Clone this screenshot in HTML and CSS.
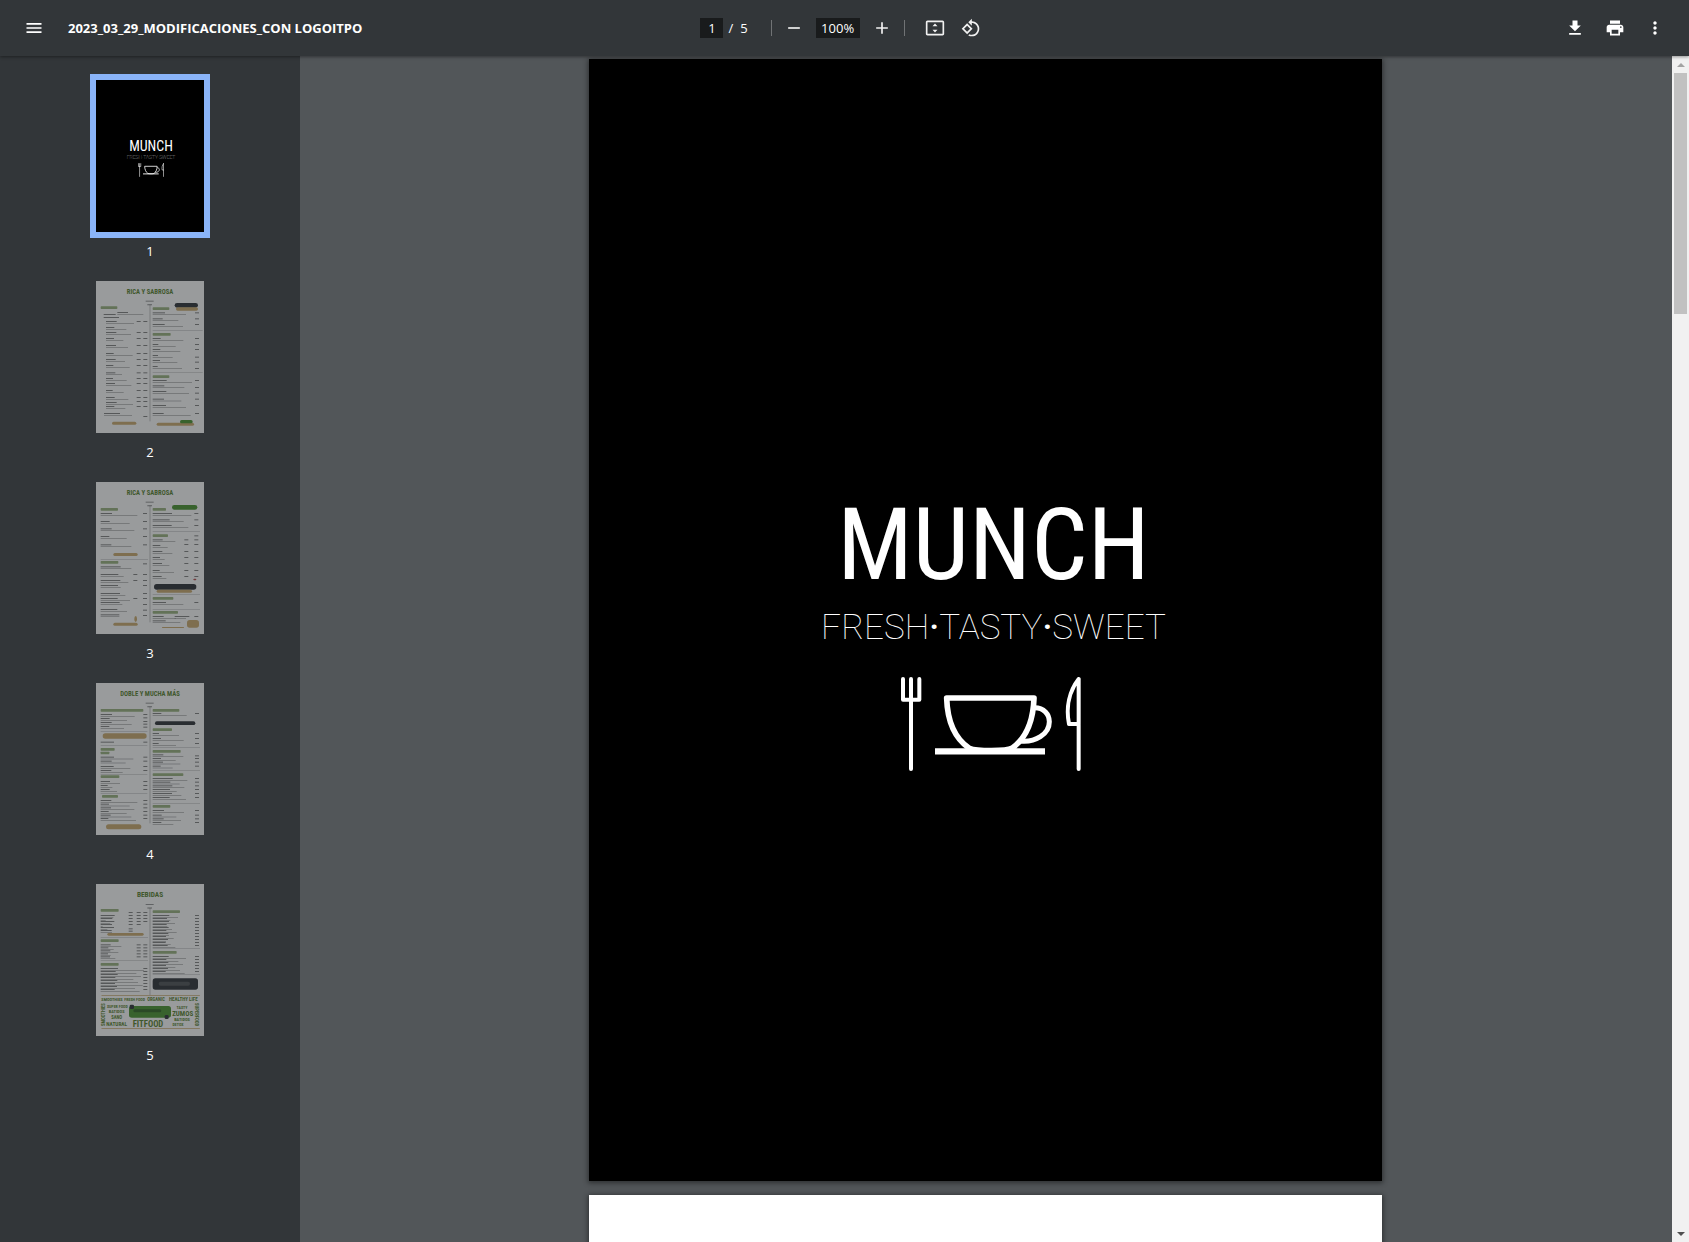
FILE: index.html
```html
<!DOCTYPE html>
<html lang="es">
<head>
<meta charset="utf-8">
<meta name="viewport" content="width=device-width, initial-scale=1">
<title>2023_03_29_MODIFICACIONES_CON LOGOITPO</title>
<link rel="stylesheet" href="styles.css">
</head>
<body>
<svg class="defs" aria-hidden="true">
  <symbol id="tableware" viewBox="300 588 546 288">
    <g fill="none" stroke="#fff" stroke-linejoin="round">
      <path stroke-width="12" stroke-linecap="round" d="M309 597V659H358V597M333 597V867M836 597V867M836 597C808 633 797 682 807 732H836"/>
      <path stroke-width="17" d="M440 654H702C700 722 678 775 636 805C620 814 530 814 508 805C464 775 442 722 440 654Z"/>
      <path stroke-width="15" d="M704 683C732 683 748 703 748 725C748 763 705 787 662 783"/>
      <path stroke-width="19" d="M405 814H735"/>
    </g>
  </symbol>
</svg>
<header class="toolbar">
  <div class="start">
    <button class="icon" aria-label="Menú"><svg viewBox="0 0 24 24"><path d="M3 18h18v-2H3v2zm0-5h18v-2H3v2zm0-7v2h18V6H3z"/></svg></button>
    <h1>2023_03_29_MODIFICACIONES_CON LOGOITPO</h1>
  </div>
  <div class="center">
    <input class="field page-field" aria-label="Número de página" value="1">
    <span class="slash">/</span><span class="total">5</span>
    <span class="divider"></span>
    <button class="icon" aria-label="Alejar"><svg viewBox="0 0 24 24"><path d="M5 11h14v2H5z"/></svg></button>
    <input class="field zoom-field" aria-label="Nivel de zoom" value="100%">
    <button class="icon" aria-label="Acercar"><svg viewBox="0 0 24 24"><path d="M19 13h-6v6h-2v-6H5v-2h6V5h2v6h6z"/></svg></button>
    <span class="divider"></span>
    <button class="icon fit" aria-label="Ajustar a la página"><svg viewBox="0 0 24 24"><path fill-rule="evenodd" d="M21 3H3C1.900 3 1 3.900 1 5v14c0 1.100.9 2 2 2h18c1.100 0 2-.9 2-2V5c0-1.100-.9-2-2-2zm0 16H3V5h18v14zM12 6.500 9 10h6zM12 17.500l3-3.500H9z"/></svg></button>
    <button class="icon" aria-label="Girar"><svg viewBox="0 0 24 24"><path d="M7.340 6.410.860 12.900l6.490 6.480 6.490-6.480-6.500-6.490zM3.690 12.900l3.660-3.660L11 12.900l-3.660 3.660-3.650-3.660zm15.670-6.260C17.610 4.880 15.300 4 13 4V.760L8.760 5 13 9.240V6c1.790 0 3.580.680 4.950 2.050 2.730 2.730 2.730 7.170 0 9.900C16.580 19.320 14.790 20 13 20c-.970 0-1.940-.210-2.840-.610l-1.490 1.490C10.020 21.620 11.510 22 13 22c2.300 0 4.610-.880 6.360-2.640 3.520-3.510 3.520-9.210 0-12.720z"/></svg></button>
  </div>
  <div class="end">
    <button class="icon" aria-label="Descargar"><svg viewBox="0 0 24 24"><path d="M19 9h-4V3H9v6H5l7 7 7-7zM5 18v2h14v-2H5z"/></svg></button>
    <button class="icon" aria-label="Imprimir"><svg viewBox="0 0 24 24"><path d="M19 8H5c-1.660 0-3 1.340-3 3v6h4v4h12v-4h4v-6c0-1.660-1.340-3-3-3zm-3 11H8v-5h8v5zm3-7c-.550 0-1-.450-1-1s.450-1 1-1 1 .450 1 1-.450 1-1 1zm-1-9H6v4h12V3z"/></svg></button>
    <button class="icon" aria-label="Más acciones"><svg viewBox="0 0 24 24"><path d="M12 8c1.100 0 2-.9 2-2s-.9-2-2-2-2 .9-2 2 .9 2 2 2zm0 2c-1.100 0-2 .9-2 2s.9 2 2 2 2-.9 2-2-.9-2-2-2zm0 6c-1.100 0-2 .9-2 2s.9 2 2 2 2-.9 2-2-.9-2-2-2z"/></svg></button>
  </div>
</header>
<div class="viewer">
  <nav class="sidebar" aria-label="Miniaturas">
    <a class="thumb active" href="#p1">
      <span class="sheet cover">
        <span class="brand">MUNCH</span>
        <span class="tagline">FRESH·TASTY·SWEET</span>
        <svg class="tableware"><use href="#tableware"/></svg>
      </span>
      <span class="number">1</span>
    </a>
    <a class="thumb" href="#p2"><svg class="sheet" viewBox="48 33 324 456" data-menu="0"></svg><span class="number">2</span></a>
    <a class="thumb" href="#p3"><svg class="sheet" viewBox="48 36 324 456" data-menu="1"></svg><span class="number">3</span></a>
    <a class="thumb" href="#p4"><svg class="sheet" viewBox="48 39 324 456" data-menu="2"></svg><span class="number">4</span></a>
    <a class="thumb" href="#p5"><svg class="sheet" viewBox="48 42 324 456" data-menu="3"></svg><span class="number">5</span></a>
  </nav>
  <main class="pages">
    <section class="page cover" id="p1">
      <span class="brand">MUNCH</span>
      <span class="tagline">FRESH<b>·</b>TASTY<b>·</b>SWEET</span>
      <svg class="tableware" role="img" aria-label="Tenedor, taza y cuchillo"><use href="#tableware"/></svg>
    </section>
    <section class="page" id="p2"></section>
  </main>
  <div class="scrollbar" aria-hidden="true">
    <svg class="arrow up" viewBox="0 0 17 17"><path d="M5 11l4-4 4 4z"/></svg>
    <span class="handle"></span>
    <svg class="arrow down" viewBox="0 0 17 17"><path d="M5 7l4 4 4-4z"/></svg>
  </div>
</div>
<script src="menus.js"></script>
</body>
</html>
```
FILE: styles.css
```css
* { box-sizing: border-box; }
body {
  margin: 0;
  height: 100vh;
  display: flex;
  flex-direction: column;
  overflow: hidden;
  background: #525659;
  color: #fff;
  font: 13px/20px "Open Sans", "Noto Sans", sans-serif;
}
.defs { position: absolute; width: 0; height: 0; }

.toolbar {
  position: relative;
  z-index: 1;
  flex: none;
  height: 56px;
  display: grid;
  grid-template-columns: 1fr auto 1fr;
  align-items: center;
  background: #323639;
  box-shadow: 0 1px 3px rgba(0, 0, 0, .4);
}
.start, .center, .end { display: flex; align-items: center; }
.start { padding-left: 18px; gap: 18px; }
.start h1 { margin: 0; font-size: 13px; line-height: 20px; font-weight: 700; white-space: nowrap; }
.center { padding-right: 2px; }
.end { justify-content: flex-end; gap: 8px; padding-right: 18px; }
.icon {
  width: 32px;
  height: 32px;
  padding: 6px;
  border: 0;
  background: none;
  color: #f1f1f1;
}
.icon svg { display: block; width: 20px; height: 20px; fill: currentColor; }
.start .icon, .end .icon { color: #fff; }
.field {
  height: 20px;
  padding: 0;
  border: 0;
  background: #191b1c;
  color: #fff;
  font: inherit;
  text-align: center;
}
.page-field { width: 23px; }
.zoom-field { width: 44px; margin: 0 6px; }
.slash { margin: 0 7px 0 5px; }
.divider { width: 1px; height: 16px; background: #707375; }
.total { margin-right: 23px; }
.total + .divider { margin-right: 6px; }
.icon + .divider { margin: 0 14px 0 6px; }
.fit { margin-right: 4px; }

.viewer { flex: 1; min-height: 0; display: flex; }
.sidebar {
  flex: none;
  width: 300px;
  padding-top: 24px;
  display: flex;
  flex-direction: column;
  align-items: center;
  gap: 20px;
  background: #323639;
}
.thumb { display: flex; flex-direction: column; align-items: center; gap: 9px; color: #fff; text-decoration: none; }
.sheet { width: 108px; height: 152px; background: #fff; opacity: .5; }
.active .sheet { opacity: 1; box-shadow: 0 0 0 6px #8ab4f8; }

.pages { flex: 1; min-width: 0; padding: 3px 1px 0 0; display: flex; flex-direction: column; align-items: center; gap: 14px; overflow: hidden; }
.page { flex: none; width: 793px; height: 1122px; background: #fff; box-shadow: 0 1px 5px 1px rgba(0, 0, 0, .45); }

.cover { display: flex; flex-direction: column; align-items: center; background: #000; color: #fff; white-space: nowrap; }
.brand { font-family: "Roboto Condensed", Roboto, sans-serif; font-weight: 400; }
.tagline { font-family: Roboto, sans-serif; font-weight: 100; }
.tagline b { font-weight: 500; }
.page.cover { padding: 436px 0 0 16px; }
.page .brand { font-size: 100px; line-height: 100px; }
.page .tagline { font-size: 35px; line-height: 66px; }
.page .tableware { width: 182px; height: 96px; margin: 15px 6px 0 0; }
.sheet.cover { padding: 58px 0 0 2px; }
.sheet .brand { font-size: 14px; line-height: 16px; }
.sheet .tagline { font-size: 5px; line-height: 6px; opacity: .7; }
.sheet .tableware { width: 26px; height: 14px; margin-top: 3px; }

.menu-title, .menu-word { font-family: "Roboto Condensed", Roboto, sans-serif; font-weight: 700; fill: #4f7a1c; text-anchor: middle; }

.scrollbar { flex: none; width: 17px; display: flex; flex-direction: column; align-items: center; background: #f1f1f1; }
.arrow { width: 17px; height: 17px; }
.up { fill: #a3a3a3; }
.down { fill: #505050; margin-top: auto; }
.handle { width: 13px; height: 241px; background: #c1c1c1; }
```
FILE: menus.js
```js
// Miniature menus. heads: [x, y, width]; rows: [x, y, title width, text width];
// prices: [x, ...ys]; rules: [x, y, width]; shapes: [x, y, width, height, colour].
const WOOD = '#c9a765', DARK = '#22262b', GREEN = '#3f8f22';
const rows = (x, ys, t, d) => ys.map((y, i) => [x, y, t - (i * 7) % 13, d - (i * 23) % 37]);

const menus = [
  {
    title: 'RICA Y SABROSA', size: 20, top: 71,
    heads: [[62, 113, 50], [218, 116, 50], [218, 193, 54], [218, 320, 50]],
    rows: [
      [71, 133, 36, 0], [71, 142, 46, 0], [112, 127, 32, 78], [72, 430, 48, 84],
      ...rows(78, [154, 172, 187, 205, 226, 250, 268, 286, 308, 325, 340, 361, 382, 397, 409], 32, 84),
      ...rows(218, [128, 146, 163], 37, 100),
      ...rows(218, [205, 223, 238, 256, 271, 289], 24, 92),
      ...rows(218, [331, 347, 364, 387, 406, 430], 42, 118)
    ],
    prices: [
      [170, 154, 187, 205, 226, 250, 268, 286, 308, 325, 340, 361, 382, 394, 409],
      [190, 154, 187, 205, 226, 250, 268, 286, 308, 325, 340, 361, 382, 394, 409, 439],
      [345, 128, 146, 163, 205, 223, 238, 261, 276, 295, 331, 352, 369, 387, 406, 430]
    ],
    rules: [[218, 181, 150], [218, 306, 150]],
    shapes: [[284, 99, 70, 14, DARK], [288, 112, 66, 10, WOOD], [96, 455, 73, 9, WOOD], [230, 458, 112, 9, WOOD], [300, 450, 38, 10, GREEN]]
  },
  {
    title: 'RICA Y SABROSA', size: 20, top: 74,
    heads: [[62, 118, 52], [218, 118, 40], [218, 197, 46], [62, 277, 53], [218, 385, 62], [218, 427, 76]],
    rows: [
      ...rows(62, [130, 154, 176, 199, 224], 34, 110),
      ...rows(62, [290, 313, 331, 346, 370, 385, 397, 418, 434], 60, 92),
      ...rows(218, [130, 149, 166], 58, 116),
      ...rows(218, [209, 226, 244, 262, 280, 301, 319], 30, 68),
      ...rows(218, [397, 439, 452], 40, 92), [284, 439, 44, 34]
    ],
    prices: [
      [189, 130, 154, 176, 199, 224, 281, 313, 331, 346, 370, 385, 403, 420, 436],
      [160, 313, 331, 385], [313, 209, 223, 244, 262, 280, 301, 319],
      [343, 130, 149, 166, 197, 209, 223, 244, 262, 280, 301, 319, 397, 439]
    ],
    rules: [[218, 184, 142], [62, 268, 142], [218, 374, 142], [218, 418, 142]],
    shapes: [[276, 105, 76, 14, GREEN], [100, 249, 73, 9, WOOD], [222, 342, 127, 17, DARK], [230, 359, 106, 9, WOOD], [100, 458, 73, 9, WOOD], [163, 438, 8, 18, WOOD], [321, 450, 36, 23, WOOD], [340, 326, 9, 5, '#b54242'], [246, 471, 66, 3, WOOD]]
  },
  {
    title: 'DOBLE Y MUCHA MÁS', size: 20, top: 77,
    heads: [[62, 121, 128], [218, 121, 80], [218, 179, 58], [62, 238, 42], [62, 249, 26], [218, 244, 84], [62, 320, 56], [66, 379, 48], [218, 314, 92], [218, 409, 53]],
    rows: [
      ...rows(62, [133, 145, 157, 169], 34, 102), [62, 216, 40, 0],
      ...rows(62, [261, 273, 289, 301], 40, 98), ...rows(62, [334, 346, 358], 28, 58),
      ...rows(62, [391, 402, 413, 424, 435, 445], 32, 110),
      ...rows(218, [130, 190, 205, 220], 26, 102), ...rows(218, [254, 265, 276, 288], 32, 92),
      ...rows(218, [325, 336, 347, 358, 370, 382], 60, 104), ...rows(218, [421, 435, 446, 457], 34, 94)
    ],
    prices: [
      [190, 133, 143, 154, 162, 171, 216, 261, 273, 289, 301, 334, 346, 358, 391, 402, 413, 424, 435, 445],
      [345, 130, 190, 205, 220, 257, 265, 276, 288, 325, 336, 347, 358, 370, 382, 421, 435, 446, 457]
    ],
    rules: [[62, 184, 140], [62, 226, 140], [218, 232, 142], [62, 312, 140], [62, 370, 140], [218, 302, 142], [218, 399, 142]],
    shapes: [[225, 154, 121, 11, DARK], [68, 190, 132, 16, WOOD], [78, 463, 106, 15, WOOD]]
  },
  {
    title: 'BEBIDAS', size: 22, top: 81,
    heads: [[62, 121, 54], [218, 125, 82], [62, 212, 54], [218, 247, 72], [62, 283, 54]],
    rows: [
      ...rows(62, [136, 145, 154, 163, 172, 181], 42, 38), ...rows(62, [224, 233, 242, 251, 260], 30, 62),
      ...rows(62, [295, 304, 313, 322, 331, 340, 349, 358], 52, 130),
      ...rows(218, [136, 145, 154, 163, 172, 181, 190, 199, 208, 217, 226], 50, 76),
      ...rows(218, [259, 268, 277, 286, 295, 304], 48, 100)
    ],
    prices: [
      [146, 127, 136, 145, 154, 163, 176, 183], [170, 127, 136, 145, 154, 163, 224, 233, 242, 251, 260],
      [190, 127, 136, 145, 154, 224, 233, 242, 251, 260, 295, 304, 313, 322, 331, 340, 349, 358],
      [345, 136, 145, 154, 163, 172, 181, 190, 199, 208, 217, 226, 259, 268, 277, 286, 295, 304]
    ],
    rules: [[62, 202, 142], [62, 272, 142], [218, 235, 142], [218, 313, 142]],
    shapes: [[82, 189, 109, 8, WOOD], [218, 325, 136, 34, DARK], [236, 335, 94, 12, '#45484b'], [64, 375, 296, 2, WOOD], [64, 474, 296, 2, WOOD], [147, 408, 126, 35, GREEN], [160, 418, 84, 9, '#245c14']],
    words: [['SMOOTHIES', 96, 394, 13], ['FRESH FOOD', 164, 394, 12], ['ORGANIC', 228, 394, 14], ['HEALTHY LIFE', 310, 394, 15], ['SUPER FOOD', 112, 413, 12], ['BATIDOS', 110, 429, 13], ['SANO', 110, 447, 14], ['NATURAL', 110, 468, 16], ['FITFOOD', 204, 471, 26], ['ZUMOS', 308, 438, 21], ['TASTY', 306, 416, 12], ['BATIDOS', 306, 454, 13], ['DETOX', 294, 469, 12]]
  }
];

const rect = (x, y, w, h, fill, o = 1, r = 0) => `<rect x="${x}" y="${y}" width="${w}" height="${h}" rx="${r}" fill="${fill}" opacity="${o}"/>`;

document.querySelectorAll('[data-menu]').forEach(svg => {
  const m = menus[svg.dataset.menu];
  const base = m.top - 5;
  let out = `<text class="menu-title" x="210" y="${m.top}" font-size="${m.size}">${m.title}</text>`;
  out += rect(209, base + 38, 2, 350 - (m.words ? 88 : 0), '#444', .5);
  out += rect(197, base + 26, 24, 3, '#444', .6) + rect(202, base + 36, 14, 4, '#444', .5);
  m.heads.forEach(([x, y, w]) => { out += rect(x, y - 4, w, 8, '#4f7a1c', .6, 2); });
  m.rows.forEach(([x, y, t, d]) => {
    out += rect(x, y - 1, t, 3, '#222', .6);
    if (d) out += rect(x, y + 5, d, 2, '#333', .5);
  });
  m.prices.forEach(([x, ...ys]) => ys.forEach(y => { out += rect(x, y - 1, 12, 3, '#222', .6); }));
  m.rules.forEach(([x, y, w]) => { out += rect(x, y, w, 1, '#333', .6); });
  m.shapes.forEach(([x, y, w, h, c]) => { out += rect(x, y, w, h, c, 1, Math.min(h / 2, 8)); });
  (m.words || []).forEach(([s, x, y, size]) => { out += `<text class="menu-word" x="${x}" y="${y}" font-size="${size}">${s}</text>`; });
  if (m.words) {
    out += `<text class="menu-word" transform="translate(74 434) rotate(-90)" font-size="14">SMOOTHIES</text>`;
    out += `<text class="menu-word" transform="translate(345 434) rotate(90)" font-size="14">SUPERFOOD</text>`;
    out += rect(149, 404, 13, 13, DARK, 1, 4) + rect(254, 435, 12, 12, DARK, 1, 4);
  }
  svg.innerHTML = out;
});
```
